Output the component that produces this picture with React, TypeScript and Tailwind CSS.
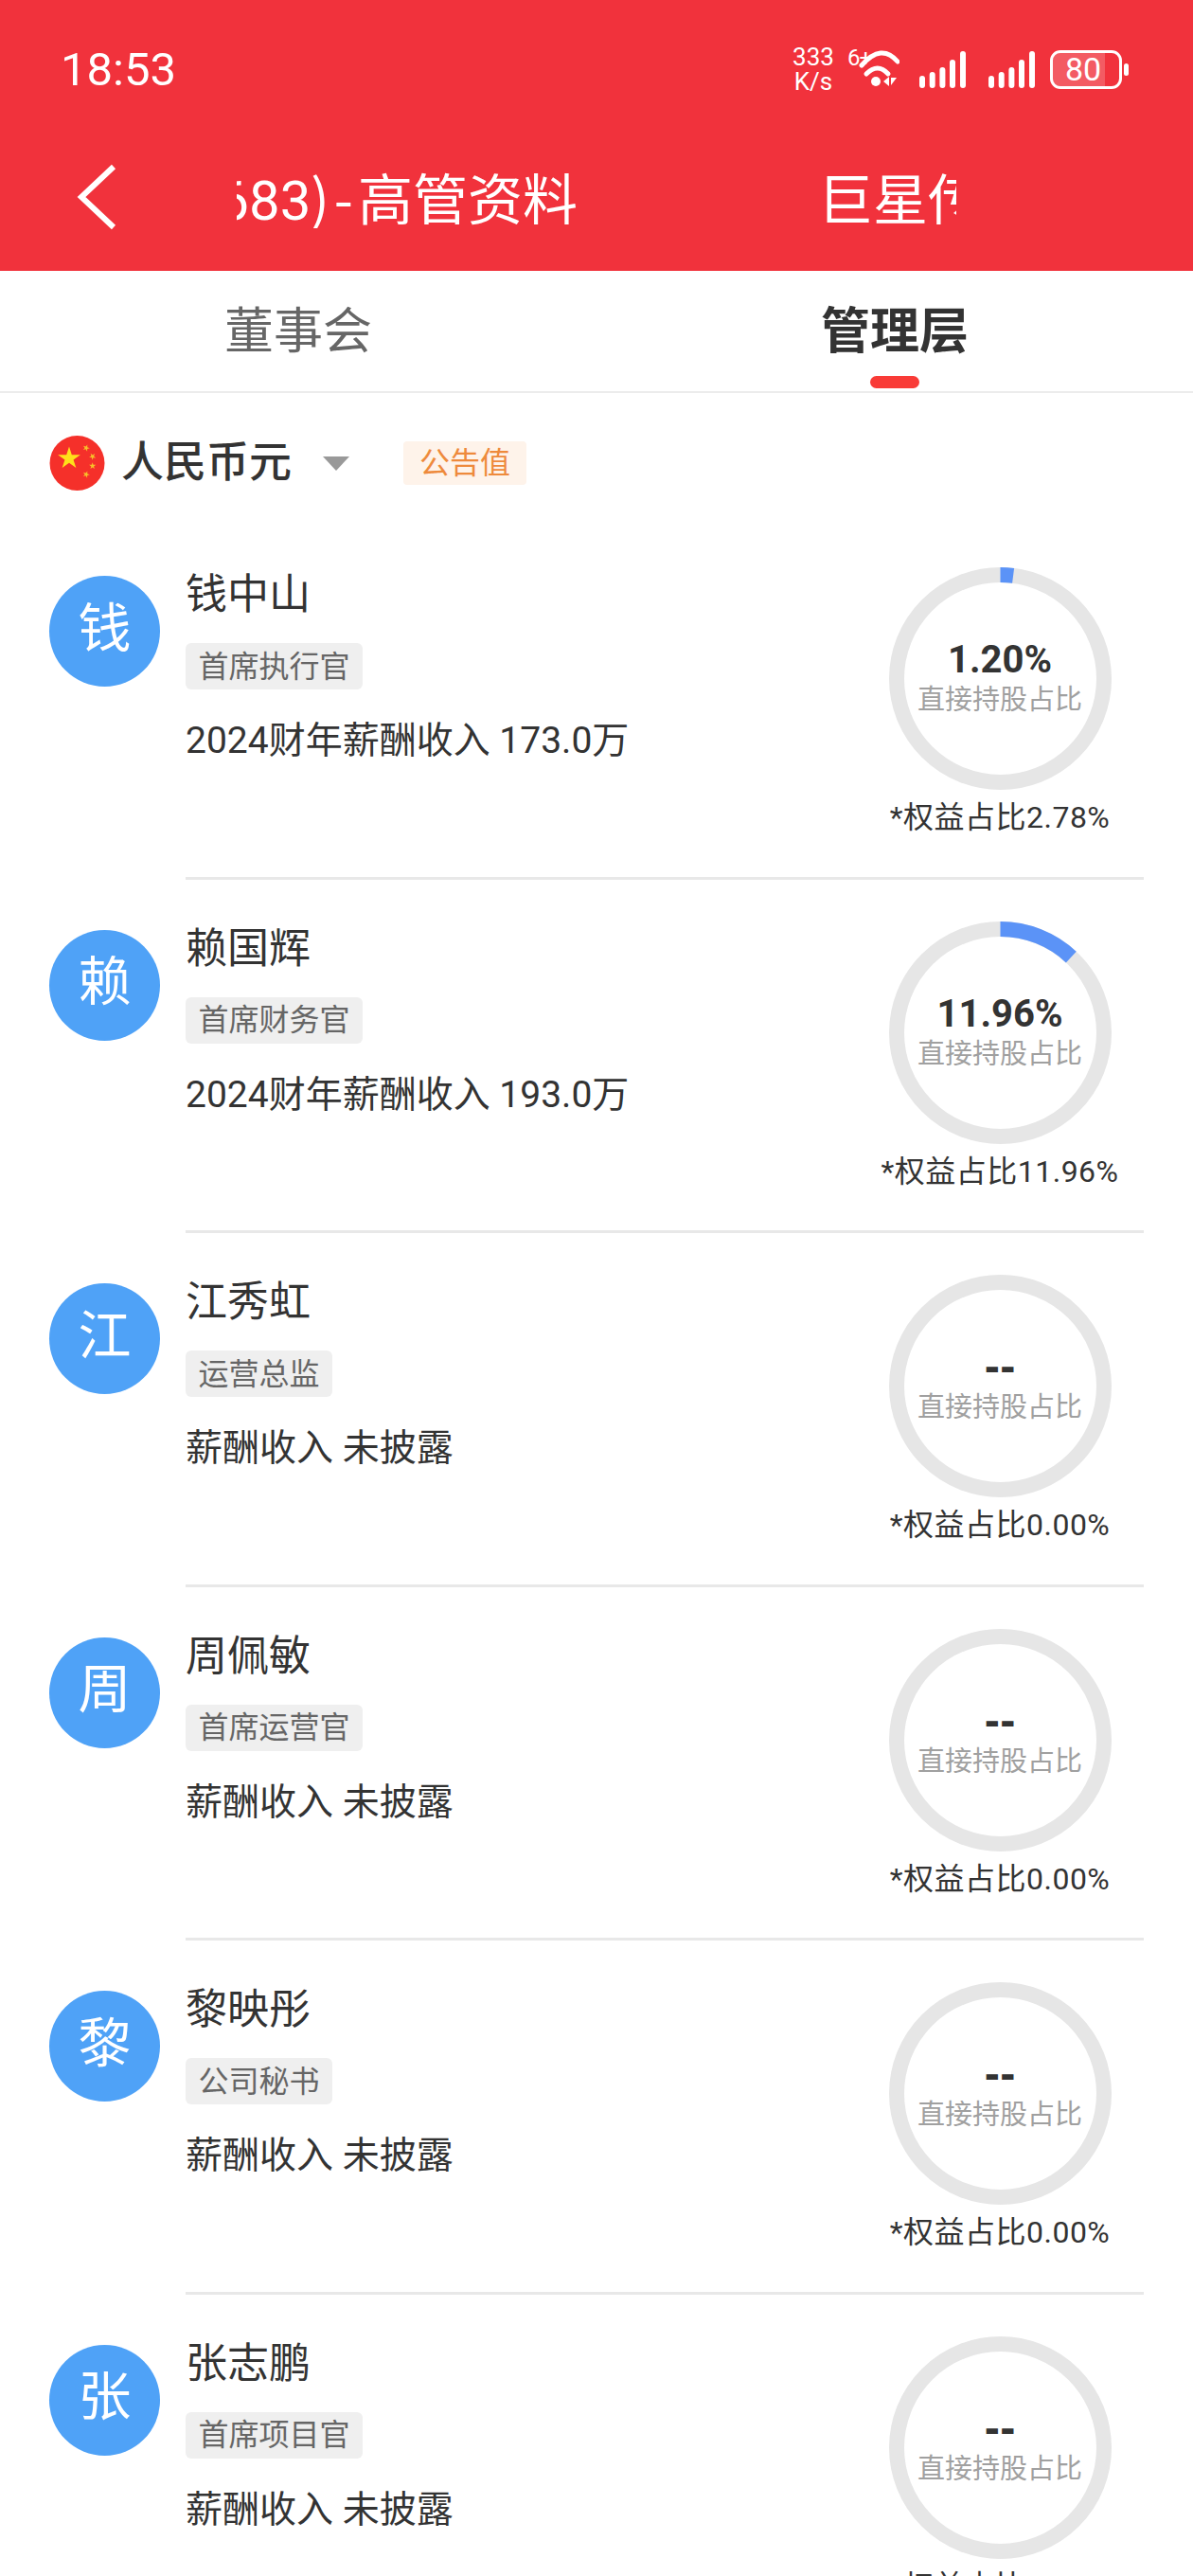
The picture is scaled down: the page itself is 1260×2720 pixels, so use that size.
import clsx from 'clsx'

interface Manager {
  name: string
  title: string
  pay: string
  value: string
  arc: number
  equity: string
}

const MANAGERS: Manager[] = [
  { name: '钱中山', title: '首席执行官', pay: '2024财年薪酬收入 173.0万', value: '1.20%', arc: 2, equity: '*权益占比2.78%' },
  { name: '赖国辉', title: '首席财务官', pay: '2024财年薪酬收入 193.0万', value: '11.96%', arc: 11.96, equity: '*权益占比11.96%' },
  { name: '江秀虹', title: '运营总监', pay: '薪酬收入 未披露', value: '--', arc: 0, equity: '*权益占比0.00%' },
  { name: '周佩敏', title: '首席运营官', pay: '薪酬收入 未披露', value: '--', arc: 0, equity: '*权益占比0.00%' },
  { name: '黎映彤', title: '公司秘书', pay: '薪酬收入 未披露', value: '--', arc: 0, equity: '*权益占比0.00%' },
  { name: '张志鹏', title: '首席项目官', pay: '薪酬收入 未披露', value: '--', arc: 0, equity: '*权益占比0.00%' },
]

function SignalBars() {
  return (
    <svg width="49" height="40" viewBox="0 0 49 40" fill="white">
      <rect x="0" y="27" width="6" height="13" rx="3" />
      <rect x="10.7" y="23" width="6" height="17" rx="3" />
      <rect x="21.4" y="18" width="6" height="22" rx="3" />
      <rect x="32" y="10" width="6" height="30" rx="3" />
      <rect x="43" y="1" width="6" height="39" rx="3" />
    </svg>
  )
}

function StatusBar() {
  return (
    <div className="h-[146px] flex items-center justify-between pl-[64px] pr-[68px] text-white">
      <span className="text-[49px] leading-none">18:53</span>
      <div className="flex items-center">
        <div className="flex flex-col items-center text-[26px] leading-[26px] w-[44px] mr-[14px]">
          <span>333</span>
          <span>K/s</span>
        </div>
        <div className="relative w-[55px] h-[42px] mr-[21px]">
          <span className="absolute left-0 -top-[4px] text-[24px] leading-[26px] tracking-[-1px]">6+</span>
          <svg className="absolute left-[12px] top-0" width="43" height="42" viewBox="0 0 43 42" fill="none" stroke="white" strokeWidth="5" strokeLinecap="round">
            <path d="M3 17 Q24 -7 41 13" />
            <path d="M8 26 Q20 14 31 26" />
            <circle cx="18" cy="34" r="5" fill="white" stroke="none" />
            <path d="M26 34 L32 29 V39 Z" fill="white" stroke="none" />
            <path d="M34 30 H40 L34 38 Z" fill="white" stroke="none" />
          </svg>
        </div>
        <SignalBars />
        <div className="w-[24px]" />
        <SignalBars />
        <div className="ml-[16px] flex items-center">
          <div className="relative w-[76px] h-[41px] rounded-[11px] border-[3px] border-white overflow-hidden">
            <div className="absolute left-0 top-0 bottom-0 w-[55px] bg-white/20" />
            <div className="relative h-full flex items-center justify-center pr-[6px] text-[34px] leading-none">80</div>
          </div>
          <div className="ml-[2px] w-[5px] h-[13px] rounded-full bg-white" />
        </div>
      </div>
    </div>
  )
}

function MarqueeText() {
  return (
    <span className="shrink-0">
      巨星传奇(06683<span className="font-['Noto_Sans_CJK_SC'] tracking-[5px]">)-</span>高管资料
    </span>
  )
}

function TitleBar() {
  return (
    <div className="h-[124px] flex items-center text-white">
      <svg className="ml-[80px] shrink-0" width="46" height="72" viewBox="0 0 46 72" fill="none" stroke="white" strokeWidth="6">
        <path d="M40 4 L6 36 L40 68" />
      </svg>
      {/* marquee title, clipped on both sides */}
      <div className="ml-[124px] w-[760px] pt-[2px] flex overflow-hidden text-[58px] leading-none whitespace-nowrap">
        <div className="w-[360px] shrink-0 flex justify-end overflow-hidden">
          <MarqueeText />
        </div>
        <div className="ml-[254px] shrink-0 flex">
          <MarqueeText />
        </div>
      </div>
    </div>
  )
}

function Tabs() {
  return (
    <div className="h-[129px] grid grid-cols-2 border-b-2 border-[#ececec]">
      <div className="flex items-center justify-center pt-[2px] text-[52px] text-[#666666]">董事会</div>
      <div className="relative flex items-center justify-center pt-[2px] text-[52px] font-bold text-[#333333]">
        管理层
        <div className="absolute bottom-[3px] left-1/2 -translate-x-1/2 w-[52px] h-[13px] rounded-full bg-[#f93b37]" />
      </div>
    </div>
  )
}

function starPoints(cx: number, cy: number, r: number, rot = 0) {
  const pts: string[] = []
  for (let i = 0; i < 10; i++) {
    const rad = i % 2 === 0 ? r : r * 0.382
    const a = ((-90 + rot + i * 36) * Math.PI) / 180
    pts.push(`${cx + rad * Math.cos(a)},${cy + rad * Math.sin(a)}`)
  }
  return pts.join(' ')
}

function FlagIcon() {
  return (
    <svg width="59" height="58" viewBox="0 0 59 58">
      <circle cx="29.5" cy="29" r="29" fill="#f5302a" />
      <polygon points={starPoints(21, 24, 12.5)} fill="#ffe01a" />
      <polygon points={starPoints(39, 13, 3.8, 20)} fill="#f7c02a" />
      <polygon points={starPoints(45.7, 22, 3.8, 40)} fill="#f7c02a" />
      <polygon points={starPoints(45.7, 32, 3.8, 0)} fill="#f7c02a" />
      <polygon points={starPoints(39, 41, 3.8, 20)} fill="#f7c02a" />
    </svg>
  )
}

function CurrencyRow() {
  return (
    <div className="pl-[52px] pt-[45px] pb-[37px] flex items-center">
      <FlagIcon />
      <span className="ml-[17px] -mt-[2px] text-[45px] font-medium leading-none text-[#333333]">人民币元</span>
      <svg className="ml-[33px]" width="28" height="15" viewBox="0 0 28 15" fill="#999999">
        <path d="M0 0 H28 L14 15 Z" />
      </svg>
      <span className="ml-[57px] h-[46px] px-[17px] flex items-center rounded-[4px] bg-[#fef3ea] text-[32px] text-[#ee8a3c]">公告值</span>
    </div>
  )
}

function Ring({ value, arc }: { value: string; arc: number }) {
  const r = 109.5
  const circ = 2 * Math.PI * r
  return (
    <div className="relative w-[235px] h-[235px]">
      <svg width="235" height="235" viewBox="0 0 235 235" fill="none" strokeWidth="16">
        <circle cx="117.5" cy="117.5" r={r} stroke="#e6e6e6" />
        {arc > 0 && (
          <circle
            cx="117.5"
            cy="117.5"
            r={r}
            stroke="#5b93f7"
            strokeDasharray={`${(arc / 100) * circ} ${circ}`}
            transform="rotate(-90 117.5 117.5)"
          />
        )}
      </svg>
      <div className="absolute inset-0 flex flex-col items-center pt-[74px]">
        <span
          className={clsx(
            'h-[48px] flex items-center text-[40px] font-bold leading-none text-[#333333]',
            value === '--' && "font-['DejaVu_Sans']"
          )}
        >
          {value}
        </span>
        <span className="-mt-[2px] text-[29px] leading-[40px] text-[#a0a0a0]">直接持股占比</span>
      </div>
    </div>
  )
}

function ManagerRow({ manager }: { manager: Manager }) {
  return (
    <div className="flex pl-[52px] pr-[52px]">
      <div className="mt-[53px] w-[117px] h-[117px] shrink-0 rounded-full bg-[#4fa2f7] flex items-center justify-center pb-[6px] text-[56px] leading-none text-white">
        {manager.name[0]}
      </div>
      <div className="ml-[27px] flex-1 h-[373.5px] flex justify-between border-b-[3px] border-[#e8e8e8]">
        <div className="pt-[48px] flex flex-col items-start">
          <span className="text-[44px] leading-[50px] text-[#333333]">{manager.name}</span>
          <span className="mt-[26px] h-[49px] px-[13.5px] flex items-center rounded-[6px] bg-[#efefef] text-[32px] text-[#666666]">
            {manager.title}
          </span>
          <span className="mt-[29px] text-[39px] leading-[50px] text-[#333333]">{manager.pay}</span>
        </div>
        <div className="w-[280px] mr-[12px] pt-[44px] flex flex-col items-center">
          <Ring value={manager.value} arc={manager.arc} />
          <span className="mt-[9px] text-[32px] tracking-[0.5px] leading-[40px] text-[#333333] whitespace-nowrap">{manager.equity}</span>
        </div>
      </div>
    </div>
  )
}

export default function App() {
  return (
    <div className="w-[1260px] h-[2720px] overflow-hidden bg-white font-['Roboto','Noto_Sans_CJK_SC',sans-serif]">
      <div className="h-[286px] bg-[#f1323c]">
        <StatusBar />
        <TitleBar />
      </div>
      <Tabs />
      <CurrencyRow />
      {MANAGERS.map((m) => (
        <ManagerRow key={m.name} manager={m} />
      ))}
    </div>
  )
}
